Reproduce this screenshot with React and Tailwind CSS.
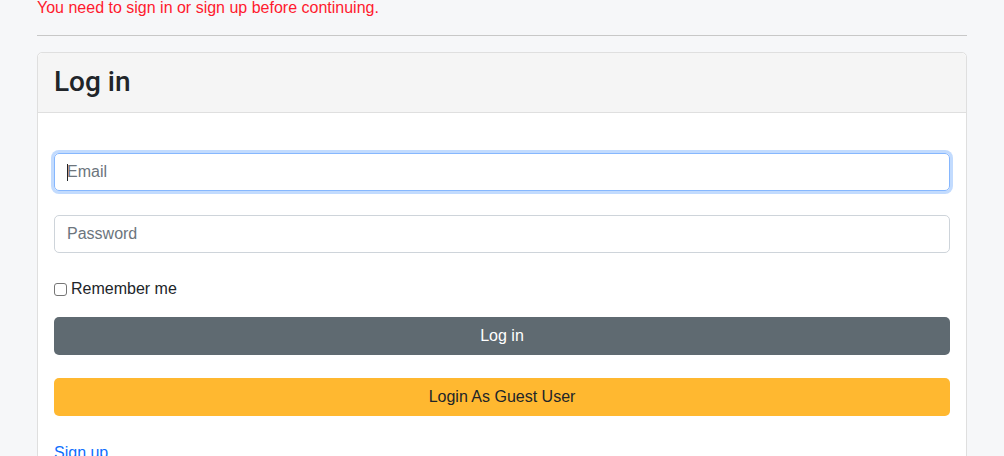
import React from 'react';

const font = { fontFamily: '"Liberation Sans", Arial, sans-serif' };

const App = () => {
  return (
    <div className="min-h-[456px] bg-[#f6f7f9] text-[#212529] overflow-hidden" style={font}>
      <div className="mx-[37px]">
        <p className="-mt-[4px] text-base leading-6 text-[#ff1a2e]">
          You need to sign in or sign up before continuing.
        </p>

        <hr className="mt-[15px] border-t border-[#c8c8c8]" />

        {/* Card */}
        <div className="mt-4 bg-white border border-[#dfdfdf] rounded-[5px]">
          <div className="bg-[#f5f5f5] border-b border-[#dfdfdf] px-4 h-[60px] flex items-center rounded-t-[5px]">
            <h2 className="-mt-[3px] text-[28px] font-medium leading-tight" style={{ fontFamily: 'Roboto, "Liberation Sans", sans-serif' }}>
              Log in
            </h2>
          </div>

          <div className="px-4 pt-[40px] pb-4">
            <div className="relative h-[38px] border border-[#86b7fe] rounded-[5px] shadow-[0_0_0_3px_rgba(13,110,253,0.25)] flex items-center px-3">
              <span className="absolute left-[12px] top-[10px] w-px h-[17px] bg-[#212529]"></span>
              <input
                className="w-full outline-none text-base text-[#212529] placeholder:text-[#6c757d] bg-transparent"
                placeholder="Email"
              />
            </div>

            <div className="mt-[24px] h-[38px] border border-[#ced4da] rounded-[5px] flex items-center px-3">
              <input
                type="password"
                className="w-full outline-none text-base placeholder:text-[#6c757d] bg-transparent"
                placeholder="Password"
              />
            </div>

            <label className="mt-[24px] flex items-center gap-[4px] text-base leading-6">
              <span className="w-[13px] h-[13px] border border-[#767676] rounded-[3px] bg-white"></span>
              Remember me
            </label>

            <button className="mt-[16px] w-full h-[38px] rounded-[5px] bg-[#5f6a71] text-white text-base">
              Log in
            </button>

            <button className="mt-[23px] w-full h-[38px] rounded-[5px] bg-[#ffb830] text-[#212529] text-base">
              Login As Guest User
            </button>

            <a className="block mt-[25px] text-base text-[#0d6efd] leading-6" href="#">
              Sign up
            </a>
          </div>
        </div>
      </div>
    </div>
  );
};

export default App;
